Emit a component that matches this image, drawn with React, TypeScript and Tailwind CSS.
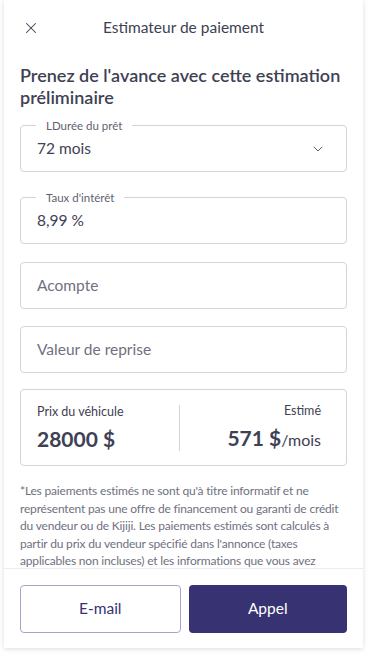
import { X, ChevronDown } from 'lucide-react';

const font = { fontFamily: 'Lato, "Noto Sans", sans-serif' };

function OutlinedField({ label, value, select }: { label?: string; value: string; select?: boolean }) {
  return (
    <div className="relative flex h-[47px] items-center rounded-[4px] border border-[#d4d4da] pl-4 pr-5">
      {label && (
        <span className="absolute -top-[8px] left-[15px] bg-white px-[10px] text-[11.5px] leading-[15px] text-[#5f6170]">
          {label}
        </span>
      )}
      <span className={`flex-1 text-[15.5px] ${label ? 'text-[#3e4153]' : 'text-[#6f7180]'}`}>{value}</span>
      {select && <ChevronDown size={16} strokeWidth={1.25} className="text-[#3e4153]" />}
    </div>
  );
}

export default function App() {
  return (
    <div className="h-[657px] w-[368px] overflow-hidden bg-white pl-[4px] pr-[5px]" style={font}>
      <div className="flex h-[648px] flex-col bg-white shadow-[0_1px_5px_rgba(0,0,0,0.14)]">
        {/* Header */}
        <div className="relative flex h-[56px] shrink-0 items-center justify-center">
          <button className="absolute left-[18px] top-[19px] text-[#3e4153]">
            <X size={18} strokeWidth={1.4} />
          </button>
          <span className="text-[15.5px] text-[#3e4153]">Estimateur de paiement</span>
        </div>

        {/* Content */}
        <div className="flex-1 overflow-hidden px-4 pt-[8px]">
          <h1 className="text-[18px] font-semibold leading-[22px] text-[#3e4153]">
            Prenez de l'avance avec cette estimation préliminaire
          </h1>

          <div className="mt-[17px]">
            <OutlinedField label="LDurée du prêt" value="72 mois" select />
          </div>
          <div className="mt-[25px]">
            <OutlinedField label="Taux d'intérêt" value="8,99 %" />
          </div>
          <div className="mt-[18px]">
            <OutlinedField value="Acompte" />
          </div>
          <div className="mt-[17px]">
            <OutlinedField value="Valeur de reprise" />
          </div>

          <div className="mt-[16px] flex h-[77px] items-center rounded-[4px] border border-[#d4d4da]">
            <div className="flex flex-1 flex-col pl-4">
              <span className="text-[12.5px] leading-[16px] text-[#3e4153]">Prix du véhicule</span>
              <span className="mt-[6px] text-[21px] font-bold leading-[26px] text-[#3e4153]">28000 $</span>
            </div>
            <div className="h-[46px] w-px bg-[#d4d4da]" />
            <div className="flex flex-1 flex-col items-end pr-[25px]">
              <span className="text-[12.5px] leading-[16px] text-[#3e4153]">Estimé</span>
              <span className="mt-[6px] leading-[26px] text-[#3e4153]">
                <span className="text-[21px] font-bold">571 $</span>
                <span className="text-[16px]">/mois</span>
              </span>
            </div>
          </div>

          <p className="mt-[16px] whitespace-nowrap text-[12px] leading-[17.5px] tracking-[-0.18px] text-[#6f7180]">
            *Les paiements estimés ne sont qu'à titre informatif et ne
            <br />
            représentent pas une offre de financement ou garanti de crédit
            <br />
            du vendeur ou de Kijiji. Les paiements estimés sont calculés à
            <br />
            partir du prix du vendeur spécifié dans l'annonce (taxes
            <br />
            applicables non incluses) et les informations que vous avez
            <br />
            entrées dans l'estimateur de paiement.
          </p>
        </div>

        {/* Footer */}
        <div className="flex shrink-0 gap-2 border-t border-[#ececf0] px-4 pb-[15px] pt-[16px]">
          <button className="h-[48px] flex-1 rounded-[4px] border border-[#a9a5c8] text-[15.5px] text-[#373373]">
            E-mail
          </button>
          <button className="h-[48px] flex-1 rounded-[4px] bg-[#373373] text-[15.5px] text-white">Appel</button>
        </div>
      </div>
    </div>
  );
}
